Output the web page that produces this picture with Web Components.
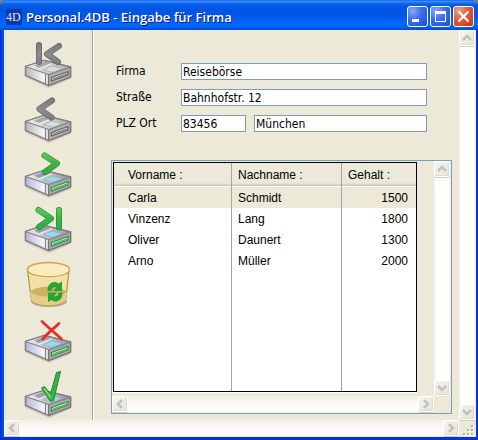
<!DOCTYPE html>
<html lang="de">
<head>
<meta charset="utf-8">
<title>Personal.4DB - Eingabe für Firma</title>
<style>
  html, body { height: 100%; margin: 0; background: #7d8078; }
  body { font: 12px/16px "DejaVu Sans Condensed", "DejaVu Sans", sans-serif; color: #000; }
</style>
</head>
<body>
<xp-window>
  <title-bar slot="title">Personal.4DB - Eingabe für Firma</title-bar>
  <tool-bar slot="tools">
    <tool-button kind="first" label="Erster Datensatz"></tool-button>
    <tool-button kind="previous" label="Vorheriger Datensatz"></tool-button>
    <tool-button kind="next" label="Nächster Datensatz"></tool-button>
    <tool-button kind="last" label="Letzter Datensatz"></tool-button>
    <tool-button kind="delete" label="Löschen"></tool-button>
    <tool-button kind="cancel" label="Abbrechen"></tool-button>
    <tool-button kind="accept" label="Bestätigen"></tool-button>
  </tool-bar>
  <company-form></company-form>
  <employee-list></employee-list>
</xp-window>

<script>
class BaseElement extends HTMLElement {
  constructor() {
    super();
    this.attachShadow({ mode: "open" });
  }
  connectedCallback() {
    this.shadowRoot.innerHTML = "<style>*{box-sizing:border-box}" + this.styles() + "</style>" + this.markup();
  }
}

customElements.define("xp-window", class extends BaseElement {
  styles() { return `
    :host { display: flex; flex-direction: column; min-height: 100vh; box-sizing: border-box;
      background: linear-gradient(90deg, #0028c8, #0046e8 2px, #0855f0 3px, #0040e0 4px, #0046e8 calc(100% - 2px), #0028b8);
      border-bottom: 3px solid #0034d8; border-radius: 7px 7px 0 0; overflow: hidden; }
    .client { flex: 1; display: grid; grid-template: 1fr 17px / 90px 1fr 17px; margin: 0 2px 0 4px; background: #ece9d8; }
    main { display: flex; flex-direction: column; padding: 33px 7px 6px 17px; min-width: 0; }
    .bottom { grid-column: 1 / 3; }
    .grip { width: 17px; height: 17px; }
  `; }
  markup() { return `
    <slot name="title"></slot>
    <div class="client">
      <slot name="tools"></slot>
      <main><slot></slot></main>
      <scroll-bar direction="vertical"></scroll-bar>
      <scroll-bar class="bottom" direction="horizontal"></scroll-bar>
      <svg class="grip" viewBox="0 0 17 17" aria-hidden="true">
        <path fill="#fff" d="M13 6h2v2h-2zM9 10h2v2H9zM13 10h2v2h-2zM5 14h2v2H5zM9 14h2v2H9zM13 14h2v2h-2z"/>
        <path fill="#b8b4a3" d="M12 5h2v2h-2zM8 9h2v2H8zM12 9h2v2h-2zM4 13h2v2H4zM8 13h2v2H8zM12 13h2v2h-2z"/>
      </svg>
    </div>`; }
});

customElements.define("title-bar", class extends BaseElement {
  styles() { return `
    :host { display: flex; align-items: center; gap: 4px; height: 30px; box-sizing: border-box; padding: 3px 4px 0 6px;
      background: linear-gradient(#0753dd 0, #3c90fc 1px, #2f82fa 2px, #0661ea 4px, #0056e3 8px, #0056e5 16px, #0066fd 22px, #0066fd 26px, #005bee 28px, #0148c8 30px); }
    svg { display: block; flex: none; }
    h1 { flex: 1; margin: 0; font: 600 13px/18px "Open Sans", "Noto Sans", sans-serif; color: #fff; text-shadow: 1px 1px 0 #0a1883; white-space: nowrap; }
    .controls { display: flex; gap: 2px; }
    button { width: 21px; height: 21px; padding: 0; border: 1px solid #fff; border-radius: 3px;
      background: radial-gradient(circle at 25% 20%, #86a5f5, #3c6df0 45%, #1a4bd8); }
    .close { background: radial-gradient(circle at 25% 20%, #f0a088, #e25a35 45%, #c8330c); }
  `; }
  markup() { return `
    <svg width="16" height="16" viewBox="0 0 16 16" aria-hidden="true">
      <rect width="16" height="16" fill="#1238a8"/>
      <text x="0" y="12" font-family="Liberation Serif" font-size="12" fill="#d4e4ff">4D</text>
    </svg>
    <h1><slot></slot></h1>
    <div class="controls">
      <button aria-label="Minimieren"><svg width="19" height="19" viewBox="0 0 19 19"><path fill="#fff" d="M4 12h7v3H4z"/></svg></button>
      <button aria-label="Maximieren"><svg width="19" height="19" viewBox="0 0 19 19"><path fill="#fff" fill-rule="evenodd" d="M4 4h11v11H4zM5 7v7h9V7z"/></svg></button>
      <button class="close" aria-label="Schließen"><svg width="19" height="19" viewBox="0 0 19 19"><path stroke="#fff" stroke-width="2.4" d="M4.5 4.5l10 10M14.5 4.5l-10 10"/></svg></button>
    </div>`; }
});

customElements.define("scroll-bar", class extends BaseElement {
  styles() { return `
    :host { display: flex; justify-content: space-between; box-sizing: border-box; }
    :host([direction="horizontal"]) { height: 17px; background: linear-gradient(#f0eee8, #f7f6f2 5px, #fefefb 12px); border-bottom: 1px solid #eeede5; }
    :host([direction="vertical"]) { width: 17px; flex-direction: column; background: linear-gradient(90deg, #f0eee8, #fefefb 2px); border-right: 1px solid #eeede5; }
    button { display: block; flex: none; width: 16px; height: 16px; padding: 0; border: 1px solid #fff; border-radius: 2px;
      background: linear-gradient(135deg, #f4f3ee, #e6e4da); box-shadow: inset -1px -1px 0 #dedbcc, 0 1px 0 #d0ccb9; }
    svg { display: block; fill: none; stroke: #c3c1b8; stroke-width: 2.5; }
  `; }
  markup() {
    const vertical = this.getAttribute("direction") === "vertical";
    const arrows = vertical
      ? [["Nach oben", "M3 9l4-4 4 4"], ["Nach unten", "M3 5l4 4 4-4"]]
      : [["Nach links", "M9 3L5 7l4 4"], ["Nach rechts", "M5 3l4 4-4 4"]];
    return arrows.map(([label, d]) =>
      `<button aria-label="${label}"><svg width="14" height="14" viewBox="0 0 14 14"><path d="${d}"/></svg></button>`).join("");
  }
});

customElements.define("tool-bar", class extends BaseElement {
  styles() { return `
    :host { display: flex; flex-direction: column; align-items: center; gap: 7px; padding: 10px 1px 0 0; border-right: 1px solid #fff; box-shadow: inset -1px 0 0 #a5a396; box-sizing: border-box; }
  `; }
  markup() { return `<slot></slot>`; }
});

const overlays = {
  first: ["M15 5v17", "M35 6L23 14l11 8"],
  previous: ["M28 5.5L15.500 14l12 8.500"],
  next: ["M20.500 5.500L33 13.500l-12 8.500"],
  last: ["M14.500 5L27 13.500l-12 8.500", "M35 5v17.500"],
};

customElements.define("tool-button", class extends BaseElement {
  styles() { return `
    :host { display: block; }
    button { display: block; padding: 0; border: 0; background: none; }
    svg { display: block; width: 48px; height: 48px; }
  `; }
  drive(gray) {
    return `
      <path d="M1.500 37l23 9.500L46.500 38v1L25 48 2 38z" fill="#8a8878" opacity=".3"/>
      <path d="M1.500 26.500L20 20.500l26.500 6.500V37L24.500 45.500 1.500 35.500z" fill="url(#side)" stroke="#838385" stroke-width="1.600" stroke-linejoin="round"/>
      <path d="M24.500 34.500L46.500 27V37L24.500 45.500z" fill="${gray ? "#b0b0ae" : "#a8a5ae"}" stroke="#77777a" stroke-width="1.300"/>
      <path d="M1.500 26.500L20 20.500l26.500 6.500L24.500 34.500z" fill="url(#top)" stroke="#838385" stroke-width="1.300" stroke-linejoin="round"/>
      <path d="M10 25.500l11-4 6 1.500-12 5z" fill="${gray ? "#a9a9a7" : "#9c9aae"}"/>
      <path d="M14 29.500l14-6" fill="none" stroke="#f0f0f2" stroke-width="1"/>
      <path d="M19 30l8.500-4 11 2.500-9.500 3.700z" fill="${gray ? "#dcdcda" : "#93deee"}" stroke="#9aa2a6" stroke-width=".6"/>
      <path d="M21.500 33.500v10.500" stroke="#85858a" stroke-width="1.200"/>
      <path d="M27.500 37.500l16.500-6v3.500l-16.500 6z" fill="${gray ? "#d8d8d6" : "#d4f0d4"}" stroke="${gray ? "#626262" : "#28943d"}" stroke-width="1.300" stroke-linejoin="round"/>
      <path d="M29 39l14-5" stroke="${gray ? "#777" : "#37b848"}" stroke-width="1.300"/>`;
  }
  bin() { return `
      <ellipse cx="25" cy="41.500" rx="18" ry="5.500" fill="#777468" opacity=".5"/>
      <path d="M3.500 9.500L7 38c1 10 34 10 35 0l3-28.500z" fill="#f3e0a4" stroke="#b29a50" stroke-width="1.300"/>
      <path d="M6 32c6-7 30-7 37 0l-1 6.500c-1 9-34 9-35 0z" fill="#cdb162"/>
      <path d="M6 32c8 6 29 6 37 0l-1 6.500c-1 9-34 9-35 0z" fill="#e6cd83"/>
      <ellipse cx="24.500" cy="9.500" rx="21" ry="7" fill="#f8ebbd" stroke="#cba848" stroke-width="1.500"/>
      <path d="M5 10.500c4 6 35 7 39 0" fill="none" stroke="#fff6cf" stroke-width="1"/>
      <path d="M23.500 31c-.5-7 5.500-11.500 11-7.500l3.500-2v9.500h-9l3-3.500c-2.500-1-4.500.5-4.500 3.500z" fill="#27a436"/>
      <path d="M38.500 32.500c.5 7-5.500 11.500-11 7.500l-3.500 2v-9.500h9l-3 3.500c2.500 1 4.500-.5 4.500-3.500z" fill="#27a436"/>`; }
  markup() {
    const kind = this.getAttribute("kind");
    const gray = kind === "first" || kind === "previous";
    let art;
    if (kind === "delete") art = this.bin();
    else {
      art = this.drive(gray);
      if (overlays[kind]) {
        const lines = overlays[kind].join("");
        art += `<g fill="none" stroke-linecap="round" stroke-linejoin="round">
          <path d="${lines}" stroke="${gray ? "#666" : "#2a8f3a"}" stroke-width="6"/>
          <path d="${lines}" stroke="url(#mark)" stroke-width="4.600"/></g>`;
      } else if (kind === "cancel") {
        art += `<path d="M18 6.500C26 14 31 18 37.500 24M35 8.500C29 14 24 18 18.500 24" fill="none" stroke="#e8302a" stroke-width="2.800" stroke-linecap="round"/>`;
      } else {
        art += `<path d="M17.500 18l3-1.500 6 7.500 6-21.500 4-1L29.500 31h-3.500z" fill="#39b148" stroke="#238c34" stroke-width="1" stroke-linejoin="round"/>
          <path d="M20 18.500l7 9" fill="none" stroke="#7fdc6a" stroke-width="1.500"/>`;
      }
    }
    return `<button aria-label="${this.getAttribute("label")}"><svg viewBox="0 0 48 48" aria-hidden="true">
      <defs>
        <linearGradient id="side"><stop stop-color="${gray ? "#b8b8b6" : "#b9b4dc"}"/><stop offset=".4" stop-color="#f4f4f6"/><stop offset="1" stop-color="#c4c4c6"/></linearGradient>
        <linearGradient id="top"><stop stop-color="#efeff0"/><stop offset="1" stop-color="${gray ? "#b4b4b2" : "#9896a6"}"/></linearGradient>
        <linearGradient id="mark" gradientUnits="userSpaceOnUse" x1="0" y1="3" x2="0" y2="25"><stop stop-color="${gray ? "#777" : "#62c85a"}"/><stop offset=".5" stop-color="${gray ? "#8c8c8c" : "#3db246"}"/><stop offset="1" stop-color="${gray ? "#7c7c7c" : "#34a843"}"/></linearGradient>
      </defs>${art}</svg></button>`;
  }
});

customElements.define("company-form", class extends BaseElement {
  styles() { return `
    :host { display: block; padding: 0 25px 28px 5px; }
    form { display: grid; grid-template-columns: 65px 65px 1fr; row-gap: 9px; align-items: center; }
    label { line-height: 17px; }
    input { display: block; width: 100%; height: 17px; padding: 0 1px; border: 1px solid #7f9db9; background: #fff; font: inherit; color: inherit; outline: 0; }
    .wide { grid-column: 2 / 4; }
    .city { padding-left: 8px; }
  `; }
  markup() { return `
    <form>
      <label for="company">Firma</label><input class="wide" id="company" value="Reisebörse">
      <label for="street">Straße</label><input class="wide" id="street" value="Bahnhofstr. 12">
      <label for="zip">PLZ Ort</label><input id="zip" value="83456">
      <div class="city"><input aria-label="Ort" value="München"></div>
    </form>`; }
});

customElements.define("employee-list", class extends BaseElement {
  styles() { return `
    :host { flex: 1; display: grid; grid-template: 1fr 17px / 1fr 17px; border: 1px solid #7f9db9; }
    .pane { display: flex; padding: 1px 17px 4px 1px; min-width: 0; }
    .sheet { flex: 1; display: flex; border: 1px solid #000; background: #fff; box-shadow: 0 1px 0 #fff; }
    table { width: 100%; table-layout: fixed; border-collapse: separate; border-spacing: 0; font: 12px/16px "Liberation Sans", Arial, sans-serif; }
    th, td { padding: 0 8px 0 6px; text-align: left; font-weight: normal; border-left: 1px solid #a5a5a5; height: 21px; white-space: nowrap; }
    th:first-child, td:first-child { padding-left: 14px; border-left: 0; width: 117px; }
    th:nth-child(2) { width: 110px; }
    td:last-child { text-align: right; }
    th { height: 24px; background: linear-gradient(#ebe9d9 20px, #d4d1be 22px, #c8c5b2 23px, #fff 23px); }
    [aria-selected] td { background: #ece9d8; }
    .rest td { height: auto; }
    .corner { background: #ece9d8; }
  `; }
  markup() {
    const rows = [["Carla", "Schmidt", 1500], ["Vinzenz", "Lang", 1800], ["Oliver", "Daunert", 1300], ["Arno", "Müller", 2000]];
    return `
      <div class="pane"><div class="sheet"><table>
        <thead><tr><th>Vorname :</th><th>Nachname :</th><th>Gehalt :</th></tr></thead>
        <tbody>${rows.map((r, i) => `<tr${i ? "" : ' aria-selected="true"'}>${r.map(c => `<td>${c}</td>`).join("")}</tr>`).join("")}
        <tr class="rest"><td></td><td></td><td></td></tr></tbody>
      </table></div></div>
      <scroll-bar direction="vertical"></scroll-bar>
      <scroll-bar direction="horizontal"></scroll-bar>
      <div class="corner"></div>`;
  }
});
</script>
</body>
</html>
